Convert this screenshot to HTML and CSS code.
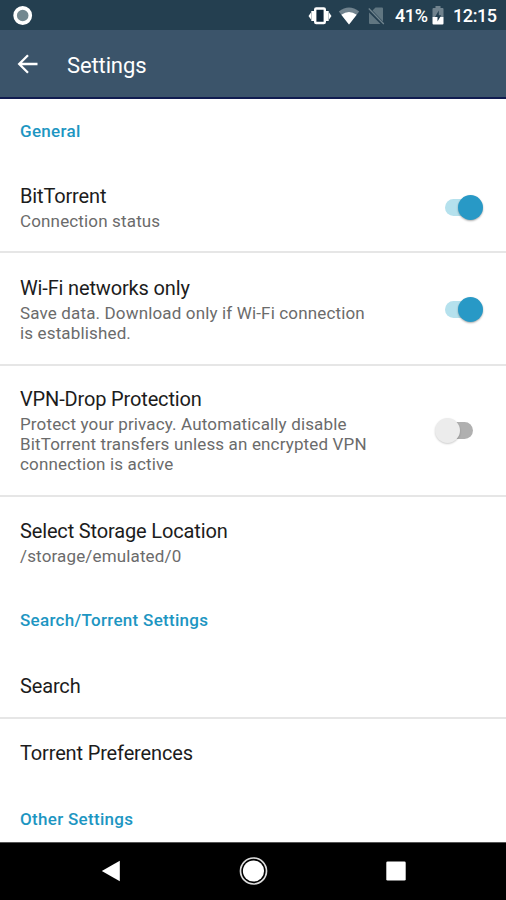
FILE: index.html
```html
<!DOCTYPE html>
<html lang="en">
<head>
<meta charset="utf-8">
<title>Settings</title>
<link rel="stylesheet" href="styles.css">
</head>
<body>
<div class="screen">
  <div class="status">
    <svg class="record" width="20" height="20" viewBox="0 0 20 20"><circle cx="9.700" cy="9.500" r="7.600" fill="#738890" stroke="#fff" stroke-width="3.600"/></svg>
    <svg class="vibrate" width="24" height="20" viewBox="0 0 24 20"><path d="M.5 10L3 6.500v7zM23.500 10L21 6.500v7zM3.300 5h3v10h-3zM17.700 5h3v10h-3z" fill="#fff"/><rect x="7.200" y="2.500" width="9.600" height="14.500" rx="1" fill="#10283a" stroke="#fff" stroke-width="2.400"/></svg>
    <svg class="wifi" width="22" height="20" viewBox="0 0 22 20"><path d="M11 18.500L.8 5.500Q11-2.500 21.200 5.500z" fill="#71838e"/><path d="M11 18.500L3.300 8.700Q11 3.200 18.700 8.700z" fill="#fff"/></svg>
    <svg class="sim" width="18" height="20" viewBox="0 0 18 20"><path d="M7.500 1.500H14q1 0 1 1v13L4.500 4.500zM1 6.500l11.500 11.500H2q-1 0-1-1z" fill="#607681"/><path d="M.8 2.500l15 15.500" stroke="#71858f" stroke-width="1.300"/></svg>
    <span class="percent">41%</span>
    <svg class="battery" width="12" height="20" viewBox="0 0 12 20"><path d="M3.500 0h5v2h2q1 0 1 1v8H.5V3q0-1 1-1h2z" fill="#71838e"/><path d="M.5 11h11v6.500q0 1-1 1h-9q-1 0-1-1z" fill="#fff"/><path d="M6.800 4.500L3 11h2.500v4.500L9.200 9.300H6.800z" fill="#243f50"/></svg>
    <span class="clock">12:15</span>
  </div>
  <header class="appbar">
    <svg class="back" width="22" height="20" viewBox="0 0 22 20"><path d="M20.500 10H2.500M11 1.300L2.200 10 11 18.700" fill="none" stroke="#fff" stroke-width="2.300"/></svg>
    <h1>Settings</h1>
  </header>
  <main>
    <h2>General</h2>
    <section class="row connection">
      <div class="copy"><h3>BitTorrent</h3><p>Connection status</p></div>
      <div class="switch on"></div>
    </section>
    <section class="row wifi-only">
      <div class="copy"><h3>Wi-Fi networks only</h3><p>Save data. Download only if Wi-Fi connection<br>is established.</p></div>
      <div class="switch on"></div>
    </section>
    <section class="row vpn">
      <div class="copy"><h3>VPN-Drop Protection</h3><p>Protect your privacy. Automatically disable<br>BitTorrent transfers unless an encrypted VPN<br>connection is active</p></div>
      <div class="switch off"></div>
    </section>
    <section class="row storage last">
      <div class="copy"><h3>Select Storage Location</h3><p>/storage/emulated/0</p></div>
    </section>
    <h2>Search/Torrent Settings</h2>
    <section class="row search"><h3>Search</h3></section>
    <section class="row prefs last"><h3>Torrent Preferences</h3></section>
    <h2>Other Settings</h2>
  </main>
  <nav>
    <svg width="20" height="22" viewBox="0 0 20 22"><path d="M.8 11L18.800.8v20.400z" fill="#fff"/></svg>
    <svg width="30" height="30" viewBox="0 0 30 30"><circle cx="14.500" cy="15" r="13" fill="none" stroke="#ddd" stroke-width="1.700"/><circle cx="14.500" cy="15" r="10.600" fill="#fff"/></svg>
    <svg width="20" height="20" viewBox="0 0 20 20"><rect x=".3" y=".5" width="19.400" height="19" rx="1.300" fill="#fff"/></svg>
  </nav>
</div>
</body>
</html>
```

FILE: styles.css
```css
* { box-sizing: border-box; }
body { margin: 0; font-family: Roboto, sans-serif; background: #fff; }
h1, h2, h3, p { margin: 0; }
svg { display: block; flex: none; }
.screen { width: 506px; height: 900px; display: flex; flex-direction: column; overflow: hidden; }
.status { height: 30px; flex: none; display: flex; align-items: center; background: #243f50; color: #fff; padding: 1px 9px 0 13px; font-size: 18px; font-weight: 500; }
.vibrate { margin-left: auto; }
.wifi { margin-left: 6px; }
.sim { margin-left: 8px; }
.percent { margin-left: 9px; width: 33px; letter-spacing: -0.4px; }
.battery { margin-left: 4px; }
.clock { margin-left: 9px; width: 44px; white-space: nowrap; letter-spacing: -0.4px; }
.appbar { height: 69px; flex: none; display: flex; align-items: center; background: #3b546a; border-bottom: 2px solid #101c50; padding: 1px 17px 0; color: #fff; }
h1 { font-size: 22px; font-weight: 400; line-height: 28px; margin-left: 28px; letter-spacing: -0.12px; padding-top: 4px; }
main { flex: 1; min-height: 0; overflow: hidden; }
h2 { height: 65px; line-height: 65px; padding-left: 20px; color: #1d96c2; font-size: 17px; font-weight: 500; letter-spacing: 0.3px; }
.row { display: flex; align-items: center; justify-content: space-between; padding: 0 23px 0 20px; border-bottom: 2px solid #e6e6e6; }
.row.last { border-bottom: 0; }
h3 { font-size: 20px; font-weight: 400; line-height: 24px; color: #1c1c1c; letter-spacing: -0.15px; white-space: nowrap; }
p { margin-top: 3px; font-size: 17px; line-height: 20px; color: #6b6b6b; letter-spacing: 0.15px; white-space: nowrap; }
.connection { height: 89px; }
.wifi-only { height: 113px; padding-top: 1px; }
.vpn { height: 131px; }
.storage { height: 91px; }
.search { height: 66px; padding-top: 1px; }
.prefs { height: 68px; }
.switch { width: 38px; height: 26px; flex: none; display: flex; align-items: center; }
.switch::before, .switch::after { content: ""; flex: none; }
.switch::before { width: 28px; height: 17px; border-radius: 9px; background: #b5e1ed; }
.switch::after { width: 25px; height: 25px; border-radius: 50%; background: #2899c6; margin-left: -15px; box-shadow: 0 1px 2px #0005; }
.switch.off { flex-direction: row-reverse; margin-right: 10px; }
.switch.off::before { background: #b0b0b0; }
.switch.off::after { background: #ececec; margin: 0 -15px 0 0; z-index: 1; box-shadow: 0 1px 2px #0003; }
nav { height: 58px; flex: none; background: #000; border-top: 1px solid #555; display: flex; align-items: center; justify-content: space-between; padding: 0 100px 2px 101px; }
```
